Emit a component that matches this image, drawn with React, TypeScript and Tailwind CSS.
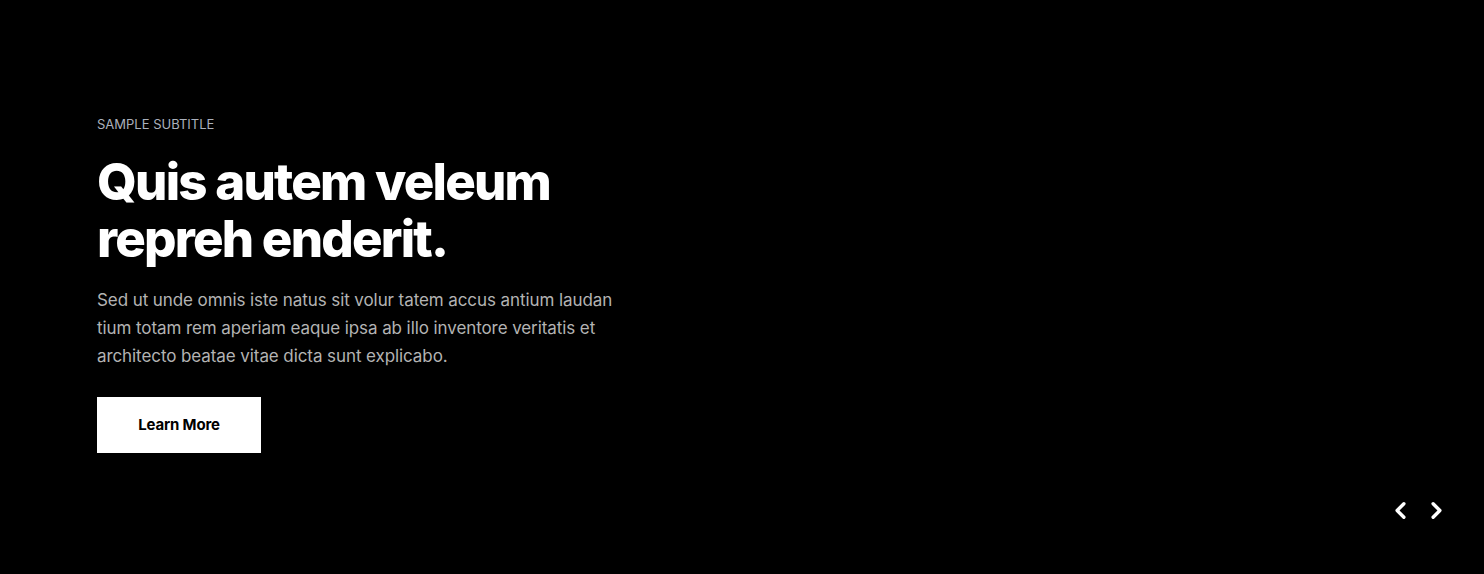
import { ChevronLeft, ChevronRight } from "lucide-react";

export default function App() {
  return (
    <div
      className="relative w-full h-[574px] bg-black overflow-hidden"
      style={{ fontFamily: "Inter, 'Noto Sans', sans-serif" }}
    >
      <div className="pl-[97px] pt-[116px] flex flex-col items-start">
        <p className="text-[13px] leading-[16px] text-[#aab0bc] uppercase">
          Sample Subtitle
        </p>
        <h1 className="mt-[21px] w-[580px] text-[51px] leading-[57px] font-extrabold text-white tracking-[-0.035em]">
          Quis autem veleum repreh enderit.
        </h1>
        <p className="mt-[19px] w-[540px] text-[17px] leading-[28px] text-[#b3b3b3] tracking-[-0.005em]">
          Sed ut unde omnis iste natus sit volur tatem accus antium laudan tium
          totam rem aperiam eaque ipsa ab illo inventore veritatis et
          architecto beatae vitae dicta sunt explicabo.
        </p>
        <button className="mt-[27px] w-[164px] h-[56px] bg-white text-black text-[15px] font-bold tracking-[-0.01em] pt-[1px]">
          Learn More
        </button>
      </div>
      <div className="absolute right-[34px] bottom-[50px] flex items-center gap-[9px] text-white">
        <button>
          <ChevronLeft className="w-[27px] h-[27px]" strokeWidth={3} />
        </button>
        <button>
          <ChevronRight className="w-[27px] h-[27px]" strokeWidth={3} />
        </button>
      </div>
    </div>
  );
}
